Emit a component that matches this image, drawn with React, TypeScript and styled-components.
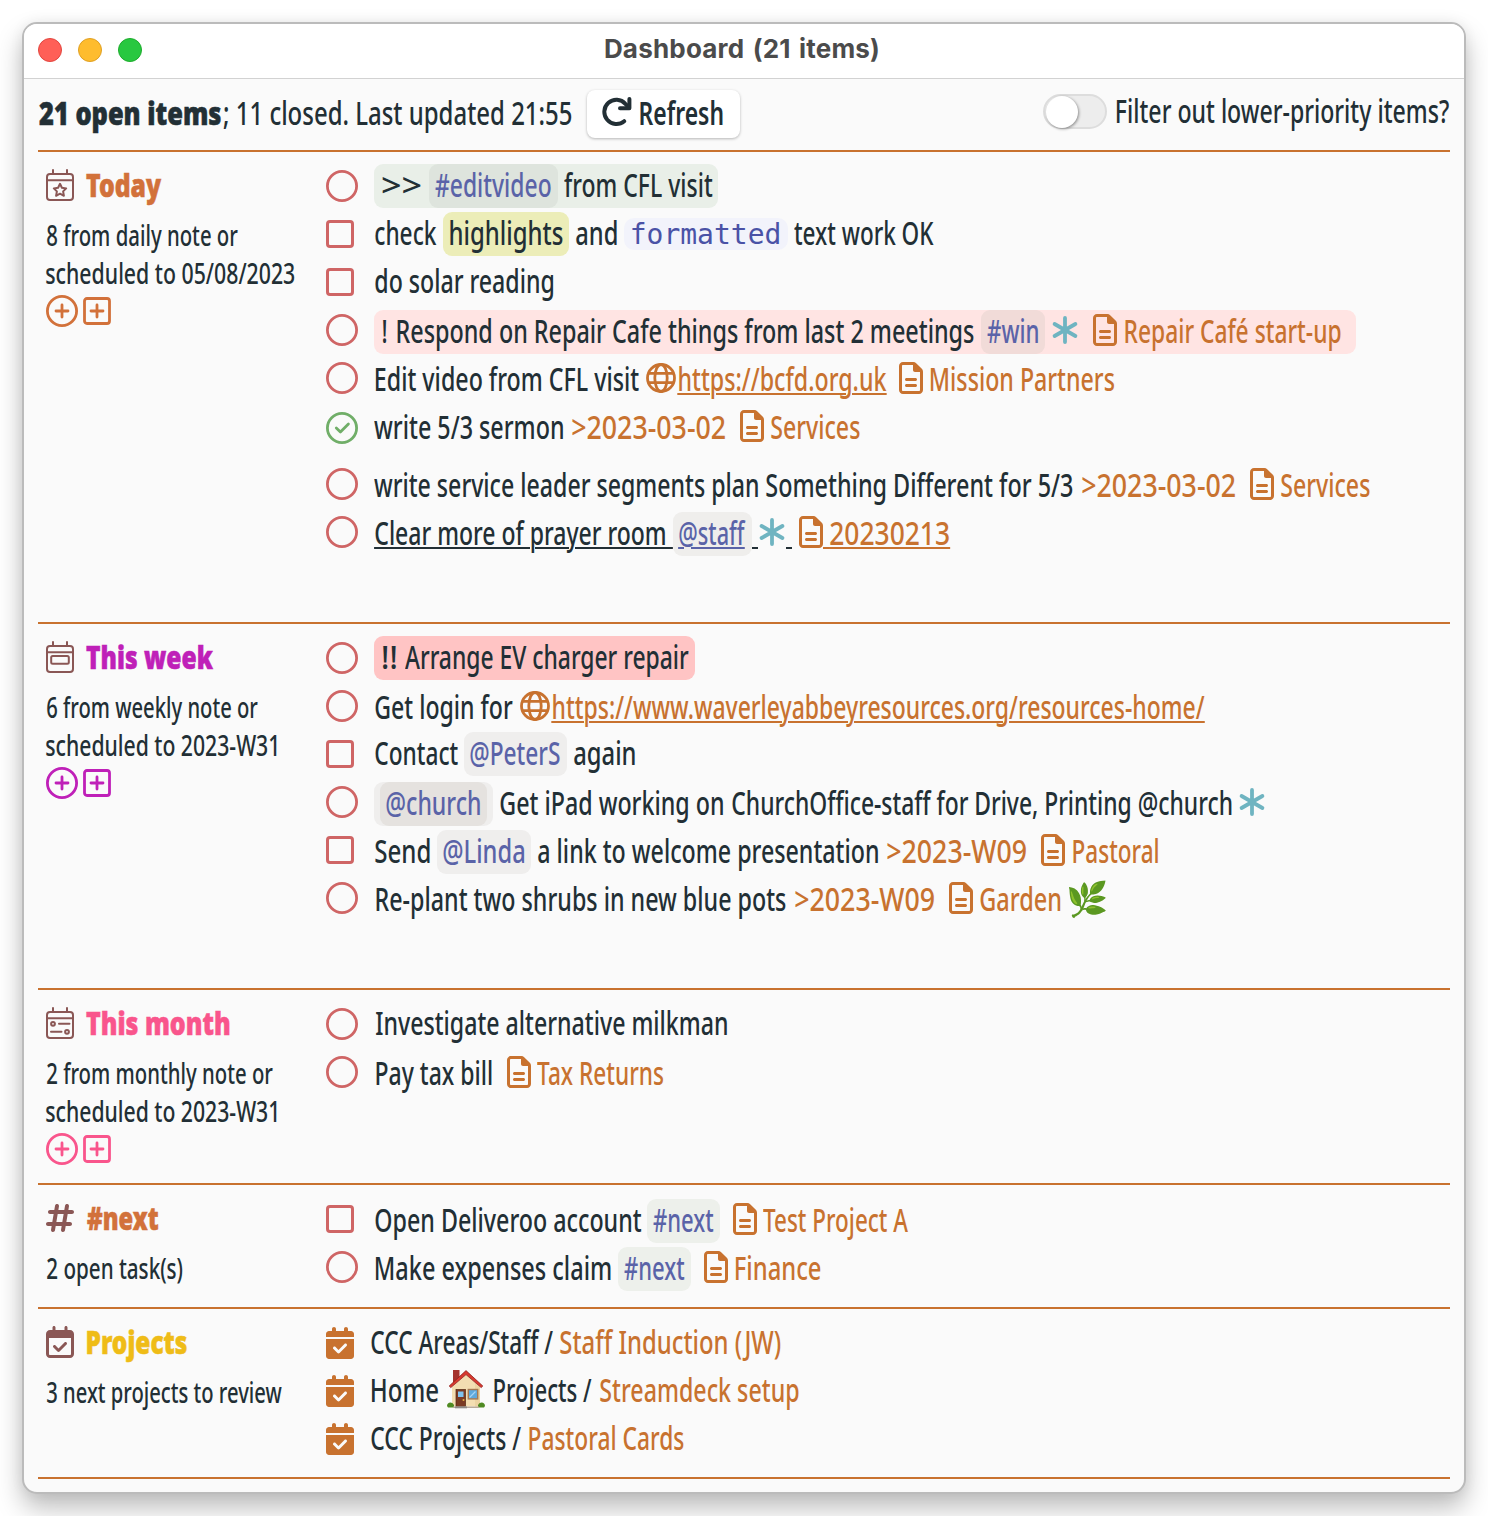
import React, { useLayoutEffect, useRef, useState } from "react";
import styled, { createGlobalStyle } from "styled-components";
import { FaCalendarCheck, FaHashtag, FaRegCalendarCheck, FaRegFileLines } from "react-icons/fa6";

const color = {
  ink: "#222f35",
  orange: "#c8722f",
  today: "#d2713a",
  week: "#bf20b8",
  month: "#f9558c",
  projects: "#efbc17",
  maroon: "#8a5755",
  open: "#cf6565",
  done: "#70ae68",
  tag: "#5a63a8",
  star: "#6fb4c1",
};

const GlobalStyle = createGlobalStyle`
  * { box-sizing: border-box; }
  body { margin: 0; background: #fff; color: ${color.ink}; font-family: "Noto Sans", "Open Sans", sans-serif; }
  svg { display: block; flex: none; }
`;

/* ---------- window chrome ---------- */

const Page = styled.div`
  padding: 22px;
  height: 1516px;
  overflow: hidden;
`;

const Window = styled.div`
  width: 1444px;
  height: 1472px;
  border: 2px solid #bbb;
  border-radius: 15px;
  background: #fafafa;
  overflow: hidden;
  box-shadow: 0 14px 26px rgba(0, 0, 0, 0.26), 0 0 14px rgba(0, 0, 0, 0.06);
`;

const TitleBar = styled.div`
  display: grid;
  grid-template-columns: 1fr auto 1fr;
  height: 55px;
  padding: 0 14px;
  background: #fff;
  border-bottom: 1px solid #d2d2d2;
`;

const Lights = styled.div`
  display: flex;
  gap: 16px;
  padding-top: 14px;
`;

const Light = styled.span<{ $fill: string; $edge: string }>`
  width: 24px;
  height: 24px;
  border-radius: 50%;
  background: ${(p) => p.$fill};
  border: 1px solid ${(p) => p.$edge};
`;

const WindowTitle = styled.div`
  padding-top: 5px;
  margin-right: 4px;
  color: #4b4b4b;
  font: 700 26px/40px Inter, sans-serif;
  letter-spacing: 0.2px;
  word-spacing: 2px;
`;

const Content = styled.div`
  padding: 0 14px;
`;

/* ---------- condensed text ---------- */

const GlyphBox = styled.span<{ $gap: number; $w: number; $tone?: string; $weight?: number; $size?: number; $under?: boolean }>`
  display: block;
  flex: none;
  width: ${(p) => p.$w}px;
  margin-left: ${(p) => p.$gap}px;
  color: ${(p) => p.$tone ?? "inherit"};
  font-weight: ${(p) => p.$weight ?? 500};
  font-size: ${(p) => p.$size ?? 32}px;
  line-height: ${(p) => (p.$size === 28 ? 38 : 41)}px;
  text-decoration: ${(p) => (p.$under ? "underline 2px" : "none")};
  text-underline-offset: 2px;
  -webkit-text-stroke: ${(p) => (p.$weight === 900 ? 0.6 : 0)}px currentColor;
`;

const GlyphRun = styled.span`
  display: block;
  width: max-content;
  white-space: pre;
  transform-origin: 0 0;
  text-decoration: inherit;
`;

type TextProps = { gap?: number; w: number; tone?: string; weight?: number; size?: number; under?: boolean; children: string };

/* Condenses a run of text so that its drawn width is exactly `w`. */
function Text({ gap = 0, w, tone, weight, size, under, children }: TextProps) {
  const ref = useRef<HTMLSpanElement>(null);
  const [fit, setFit] = useState({ scale: 0.75, left: 0 });
  useLayoutEffect(() => {
    const cs = getComputedStyle(ref.current!);
    const ctx = document.createElement("canvas").getContext("2d")!;
    ctx.font = `${cs.fontWeight} ${cs.fontSize} ${cs.fontFamily}`;
    const m = ctx.measureText(children.trimEnd());
    setFit({ scale: w / (m.actualBoundingBoxLeft + m.actualBoundingBoxRight), left: m.actualBoundingBoxLeft });
  }, [children, w]);
  return (
    <GlyphBox $gap={gap} $w={w} $tone={tone} $weight={weight} $size={size} $under={under}>
      <GlyphRun ref={ref} style={{ transform: `translateX(${fit.left * fit.scale}px) scaleX(${fit.scale})` }}>
        {children}
      </GlyphRun>
    </GlyphBox>
  );
}

/* ---------- header ---------- */

const Header = styled.header`
  display: flex;
  align-items: flex-start;
  height: 73px;
  border-bottom: 2px solid ${color.orange};
`;

const Summary = styled.div`
  display: flex;
  padding: 13px 0 0 1px;
`;

const RefreshButton = styled.button`
  display: flex;
  width: 153px;
  height: 48px;
  margin: 11px 0 0 15.5px;
  padding: 2px 0 0 15px;
  border: 0;
  border-radius: 8px;
  background: #fff;
  color: inherit;
  font-family: inherit;
  text-align: left;
  box-shadow: 0 1px 3px rgba(0, 0, 0, 0.28);
  svg { margin-top: 5px; }
`;

const FilterLabel = styled.label`
  display: flex;
  margin-left: auto;
  padding: 11px 1px 0 0;
`;

const Track = styled.span`
  width: 64px;
  height: 35px;
  margin-top: 4px;
  padding: 0 1px;
  border: 2px solid #dddddd;
  border-radius: 18px;
  background: #ededed;
`;

const Knob = styled.span`
  display: block;
  width: 32px;
  height: 32px;
  border-radius: 50%;
  background: #fff;
  box-shadow: 1px 1px 3px rgba(0, 0, 0, 0.4);
`;

/* ---------- sections ---------- */

const Section = styled.section<{ $h: number }>`
  display: grid;
  grid-template-columns: 280px 1fr;
  height: ${(p) => p.$h}px;
  padding: 12px 0 0 8px;
  border-bottom: 2px solid ${color.orange};
`;

const SectionHead = styled.div<{ $tone: string }>`
  display: flex;
  height: 44px;
  margin-bottom: 8px;
  color: ${(p) => p.$tone};
`;

const SectionIcon = styled.span`
  display: flex;
  align-items: center;
  width: 40px;
  height: 42px;
  color: ${color.maroon};
`;

const AddButtons = styled.div<{ $tone: string }>`
  display: flex;
  align-items: center;
  gap: 5px;
  padding-top: 3px;
  color: ${(p) => p.$tone};
`;

const List = styled.div<{ $top?: number }>`
  display: flex;
  flex-direction: column;
  gap: 4px;
  padding-top: ${(p) => p.$top ?? 0}px;
`;

const Row = styled.div<{ $before?: number }>`
  display: flex;
  height: 44px;
  margin-top: ${(p) => p.$before ?? 0}px;
`;

const Status = styled.span<{ $up?: boolean; $w?: number }>`
  display: flex;
  flex: none;
  align-items: center;
  width: ${(p) => p.$w ?? 48}px;
  height: ${(p) => (p.$up ? 40 : 44)}px;
`;

const Chip = styled.span<{ $bg: string; $gap?: number; $pad?: number; $w: number }>`
  display: flex;
  flex: none;
  width: ${(p) => p.$w}px;
  height: 44px;
  margin-left: ${(p) => p.$gap ?? 0}px;
  padding-left: ${(p) => p.$pad ?? 6}px;
  border-radius: 9px;
  background: ${(p) => p.$bg};
`;

const Code = styled.code`
  width: 164px;
  height: 32px;
  margin: 6px 0 0 7px;
  padding-left: 6px;
  border-radius: 10px;
  background: #f2f3fb;
  color: #4a52a6;
  font: 28px/33px "DejaVu Sans Mono", monospace;
`;

const Inline = styled.span<{ $gap?: number; $tone?: string }>`
  display: flex;
  flex: none;
  align-items: center;
  height: 40px;
  margin-left: ${(p) => p.$gap ?? 0}px;
  color: ${(p) => p.$tone ?? "inherit"};
`;

const UnderlinedSpace = styled.span<{ $tone: string; $gap?: number }>`
  width: 6px;
  height: 37px;
  margin-left: ${(p) => p.$gap ?? 0}px;
  border-bottom: 2px solid ${(p) => p.$tone};
`;

const FileIcon = styled(FaRegFileLines)`
  width: 24px;
  height: 32px;
`;

const ReviewIcon = styled(FaCalendarCheck)`
  width: 28px;
  height: 32px;
  color: ${color.orange};
`;

const ProjectsIcon = styled(FaRegCalendarCheck)`
  width: 28px;
  height: 32px;
`;

const HashIcon = styled(FaHashtag)`
  width: 28px;
  height: 32px;
`;

const Emoji = styled.span<{ $gap: number }>`
  width: 42px;
  margin-left: ${(p) => p.$gap}px;
  font: 34px/42px "Noto Color Emoji", sans-serif;
`;

/* ---------- drawings ---------- */

const Circle = () => (
  <svg width="32" height="32" fill="none" stroke={color.open} strokeWidth="2.8">
    <circle cx="16" cy="16" r="14.6" />
  </svg>
);

const Square = () => (
  <svg width="28" height="28" fill="none" stroke={color.open} strokeWidth="3">
    <rect x="1.5" y="1.5" width="25" height="25" rx="2.5" />
  </svg>
);

const DoneCircle = () => (
  <svg width="32" height="32" fill="none" stroke={color.done} strokeWidth="2.8" strokeLinecap="round" strokeLinejoin="round">
    <circle cx="16" cy="16" r="14.6" />
    <path d="M10.3 16l4.1 4 8-8" />
  </svg>
);

const AddCircle = () => (
  <svg width="32" height="32" fill="none" stroke="currentColor" strokeWidth="2.8" strokeLinecap="round">
    <circle cx="16" cy="16" r="14.6" />
    <path d="M16 10v12M10 16h12" />
  </svg>
);

const AddSquare = () => (
  <svg width="28" height="28" fill="none" stroke="currentColor" strokeWidth="2.8" strokeLinecap="round">
    <rect x="1.5" y="1.5" width="25" height="25" rx="2.5" />
    <path d="M14 8v12M8 14h12" />
  </svg>
);

const Asterisk = () => (
  <svg width="26" height="28" fill="none" stroke={color.star} strokeWidth="3.8" strokeLinecap="round">
    <path d="M13 2v24M2.6 8l20.8 12M23.4 8L2.6 20" />
  </svg>
);

const Globe = () => (
  <svg width="30" height="30" fill="none" stroke={color.orange} strokeWidth="2.8">
    <circle cx="15" cy="15" r="13.5" />
    <ellipse cx="15" cy="15" rx="6.2" ry="13.5" />
    <path d="M2.5 10.3h25M2.5 19.7h25" />
  </svg>
);

const RefreshIcon = () => (
  <svg width="30" height="30" fill="none" stroke={color.ink} strokeWidth="4" strokeLinecap="round" strokeLinejoin="round">
    <path d="M22.2 24.2A12.1 12.1 0 1 1 23.4 6.8L27 10.6" />
    <path d="M27.4 2v9.2h-9.4" />
  </svg>
);

const CalendarFrame = ({ children }: { children: React.ReactNode }) => (
  <svg width="28" height="32" fill="none" stroke="currentColor" strokeWidth="2" strokeLinecap="round" strokeLinejoin="round">
    <rect x="1" y="5" width="26" height="26" rx="3" />
    <path d="M1 11.2h26M7 1v4M21 1v4" />
    {children}
  </svg>
);

const DayIcon = () => (
  <CalendarFrame>
    <path d="M14 14.8l1.9 4 4.3.6-3.1 3 .8 4.4-3.9-2.1-3.9 2.1.8-4.4-3.1-3 4.3-.6z" />
  </CalendarFrame>
);

const WeekIcon = () => (
  <CalendarFrame>
    <rect x="5.2" y="15" width="17.6" height="7.8" rx="1.5" />
  </CalendarFrame>
);

const MonthIcon = () => (
  <CalendarFrame>
    <circle cx="7" cy="16.8" r="1.9" />
    <circle cx="21" cy="24.8" r="1.9" />
    <path d="M13 16.8h10.5M5 24.8h10.5" />
  </CalendarFrame>
);

const House = () => (
  <svg width="38" height="40" viewBox="0 0 38 40">
    <path d="M6 1h6.5v9L6 16z" fill="#a5322c" />
    <path d="M5 18L19 5l14 13v19.5H5z" fill="#f3deb2" />
    <path d="M28 14l5 4v19.5h-5z" fill="#ecd3a2" />
    <path d="M2.2 17L19 1.6 35.8 17l-1.6 1.6L19 5.6 3.8 18.6z" fill="#d8392f" stroke="#8f211d" strokeWidth=".8" />
    <rect x="9" y="20.5" width="9.5" height="17" fill="#7b3b24" stroke="#55270f" strokeWidth=".7" />
    <rect x="11" y="22.5" width="5.5" height="5.5" fill="#7fc3ee" />
    <circle cx="16.5" cy="31" r="1" fill="#e5b44a" />
    <rect x="21.3" y="20.5" width="9.4" height="9.4" fill="#5fa9dc" stroke="#a57a53" strokeWidth="1.4" />
    <path d="M22.5 28.5l6-6" stroke="#a5d5f3" strokeWidth="1.2" />
    <path d="M0 37c0-4 5-5 7-1v2.5H1z" fill="#4f8a22" />
    <path d="M38 37c0-4-5-5-7-1v2.500h6z" fill="#4f8a22" />
    <path d="M6 37.5h26v1.500H6z" fill="#b9ab9a" />
    <path d="M8 37.5h12v1.800H8z" fill="#8e8a88" />
  </svg>
);

/* ---------- row parts ---------- */

type TaskProps = { kind?: "circle" | "square" | "done"; up?: boolean; before?: number; children: React.ReactNode };

const Task = ({ kind = "circle", up, before, children }: TaskProps) => (
  <Row $before={before}>
    <Status $up={up}>{kind === "square" ? <Square /> : kind === "done" ? <DoneCircle /> : <Circle />}</Status>
    {children}
  </Row>
);

const NoteLink = ({ gap, textGap = 6.5, w, under, children }: { gap: number; textGap?: number; w: number; under?: boolean; children: string }) => (
  <>
    <Inline $gap={gap} $tone={color.orange}>
      <FileIcon />
    </Inline>
    {under && <UnderlinedSpace $tone={color.orange} />}
    <Text gap={under ? textGap - 6 : textGap} w={w} tone={color.orange} under={under}>
      {children}
    </Text>
  </>
);

const Tag = ({ gap, w, bg, textW, under, children }: { gap: number; w: number; bg: string; textW: number; under?: boolean; children: string }) => (
  <Chip $bg={bg} $gap={gap} $w={w}>
    <Text w={textW} tone={color.tag} under={under}>
      {children}
    </Text>
  </Chip>
);

const Project = ({ children }: { children: React.ReactNode }) => (
  <Row>
    <Status $w={44.5}>
      <ReviewIcon />
    </Status>
    {children}
  </Row>
);

const Heading = ({ icon, tone, gap = 0, w, children }: { icon: React.ReactNode; tone: string; gap?: number; w: number; children: string }) => (
  <SectionHead $tone={tone}>
    <SectionIcon>{icon}</SectionIcon>
    <Text gap={gap} w={w} weight={900}>
      {children}
    </Text>
  </SectionHead>
);

const Add = ({ tone }: { tone: string }) => (
  <AddButtons $tone={tone}>
    <AddCircle />
    <AddSquare />
  </AddButtons>
);

export default function App() {
  return (
    <>
      <GlobalStyle />
      <Page>
        <Window>
          <TitleBar>
            <Lights>
              <Light $fill="#ff5f57" $edge="#e2463f" />
              <Light $fill="#febc2e" $edge="#e0a023" />
              <Light $fill="#28c840" $edge="#1dac2c" />
            </Lights>
            <WindowTitle>Dashboard (21 items)</WindowTitle>
          </TitleBar>
          <Content>
            <Header>
              <Summary>
                <Text w={182} weight={900}>21 open items</Text>
                <Text gap={1.5} w={348.5}>; 11 closed. Last updated 21:55</Text>
              </Summary>
              <RefreshButton>
                <RefreshIcon />
                <Text gap={8.5} w={83} weight={600}>Refresh</Text>
              </RefreshButton>
              <FilterLabel>
                <Track>
                  <Knob />
                </Track>
                <Text gap={10} w={332}>Filter out lower-priority items?</Text>
              </FilterLabel>
            </Header>

            <Section $h={472}>
              <div>
                <Heading icon={<DayIcon />} tone={color.today} w={75.5}>Today</Heading>
                <Text gap={0.5} w={191} size={28}>8 from daily note or</Text>
                <Text w={248.5} size={28}>scheduled to 05/08/2023</Text>
                <Add tone={color.today} />
              </div>
              <List>
                <Task>
                  <Chip $bg="#e9efe8" $w={344} $pad={7.5}>
                    <Text w={38.5}>&gt;&gt;</Text>
                    <Tag gap={9} w={129} bg="#dee4dd" textW={115.5}>#editvideo</Tag>
                    <Text gap={5.5} w={148.5}>from CFL visit</Text>
                  </Chip>
                </Task>
                <Task kind="square">
                  <Text gap={0.7} w={61.5}>check</Text>
                  <Chip $bg="#ecedb8" $gap={6.8} $w={126}>
                    <Text gap={0.7} w={113}>highlights</Text>
                  </Chip>
                  <Text gap={6.7} w={41}>and</Text>
                  <Code>formatted</Code>
                  <Text gap={6.5} w={140}>text work OK</Text>
                </Task>
                <Task kind="square">
                  <Text gap={0.7} w={178.5}>do solar reading</Text>
                </Task>
                <Task up before={2}>
                  <Chip $bg="#ffe4e3" $w={982} $pad={9}>
                    <Text w={3.5}>!</Text>
                    <Text gap={10} w={577}>Respond on Repair Cafe things from last 2 meetings</Text>
                    <Tag gap={7.5} w={64} bg="#f1dbd8" textW={51}>#win</Tag>
                    <Inline $gap={7}>
                      <Asterisk />
                    </Inline>
                    <NoteLink gap={15} textGap={8} w={216}>Repair Café start-up</NoteLink>
                  </Chip>
                </Task>
                <Task up>
                  <Text gap={2} w={263}>Edit video from CFL visit</Text>
                  <Inline $gap={7}>
                    <Globe />
                  </Inline>
                  <Text gap={2.5} w={207.5} tone={color.orange} under>https://bcfd.org.uk</Text>
                  <NoteLink gap={13} textGap={7.5} w={183.5}>Mission Partners</NoteLink>
                </Task>
                <Task kind="done">
                  <Text gap={0} w={189}>write 5/3 sermon</Text>
                  <Text gap={9} w={153} tone={color.orange}>&gt;2023-03-02</Text>
                  <NoteLink gap={15} textGap={7} w={89}>Services</NoteLink>
                </Task>
                <Task up before={10}>
                  <Text gap={0} w={384}>write service leader segments plan</Text>
                  <Text gap={8} w={306.5}>Something Different for 5/3</Text>
                  <Text gap={9} w={153} tone={color.orange}>&gt;2023-03-02</Text>
                  <NoteLink gap={15} textGap={7} w={89}>Services</NoteLink>
                </Task>
                <Task up>
                  <Text gap={1} w={290} under>{"Clear more of prayer room "}</Text>
                  <Tag gap={8} w={79} bg="#efeeec" textW={67} under>@staff</Tag>
                  <UnderlinedSpace $tone={color.ink} />
                  <Inline $gap={0.5}>
                    <Asterisk />
                  </Inline>
                  <UnderlinedSpace $tone={color.ink} $gap={1.5} />
                  <NoteLink gap={7} textGap={7} w={119} under>20230213</NoteLink>
                </Task>
              </List>
            </Section>

            <Section $h={366}>
              <div>
                <Heading icon={<WeekIcon />} tone={color.week} w={127.5}>This week</Heading>
                <Text gap={0.5} w={211} size={28}>6 from weekly note or</Text>
                <Text w={230.5} size={28}>scheduled to 2023-W31</Text>
                <Add tone={color.week} />
              </div>
              <List>
                <Task>
                  <Chip $bg="#ffc4c4" $w={321} $pad={8.5}>
                    <Text w={13}>!!</Text>
                    <Text gap={9} w={284}>Arrange EV charger repair</Text>
                  </Chip>
                </Task>
                <Task up before={2}>
                  <Text gap={1} w={138}>Get login for</Text>
                  <Inline $gap={6.5}>
                    <Globe />
                  </Inline>
                  <Text gap={3} w={652} tone={color.orange} under>https://www.waverleyabbeyresources.org/resources-home/</Text>
                </Task>
                <Task kind="square" before={-2}>
                  <Text gap={1} w={83}>Contact</Text>
                  <Tag gap={6} w={103} bg="#efeeed" textW={90}>@PeterS</Tag>
                  <Text gap={6.5} w={61}>again</Text>
                </Task>
                <Task up before={2}>
                  <Chip $bg="#efeeed" $w={118.5} $pad={6}>
                    <Tag gap={0} w={107} bg="#e5e2df" textW={94}>@church</Tag>
                  </Chip>
                  <Text gap={7.5} w={223}>Get iPad working on</Text>
                  <Text gap={8.5} w={499.5}>ChurchOffice-staff for Drive, Printing @church</Text>
                  <Inline $gap={8}>
                    <Asterisk />
                  </Inline>
                </Task>
                <Task kind="square" up>
                  <Text gap={0.7} w={55}>Send</Text>
                  <Tag gap={7.3} w={94} bg="#efeeed" textW={81}>@Linda</Tag>
                  <Text gap={7} w={340}>a link to welcome presentation</Text>
                  <Text gap={9} w={139} tone={color.orange}>&gt;2023-W09</Text>
                  <NoteLink gap={15} textGap={8} w={85.5}>Pastoral</NoteLink>
                </Task>
                <Task up>
                  <Text gap={2} w={410}>Re-plant two shrubs in new blue pots</Text>
                  <Text gap={8.5} w={139} tone={color.orange}>&gt;2023-W09</Text>
                  <NoteLink gap={15} textGap={7} w={80.5}>Garden</NoteLink>
                  <Emoji $gap={6.5}>🌿</Emoji>
                </Task>
              </List>
            </Section>

            <Section $h={195}>
              <div>
                <Heading icon={<MonthIcon />} tone={color.month} w={143.5}>This month</Heading>
                <Text gap={0.5} w={226} size={28}>2 from monthly note or</Text>
                <Text w={230.5} size={28}>scheduled to 2023-W31</Text>
                <Add tone={color.month} />
              </div>
              <List>
                <Task>
                  <Text gap={1.5} w={351}>Investigate alternative milkman</Text>
                </Task>
                <Task up before={2}>
                  <Text gap={2} w={116}>Pay tax bill</Text>
                  <NoteLink gap={14.5} textGap={6} w={126.5}>Tax Returns</NoteLink>
                </Task>
              </List>
            </Section>

            <Section $h={124}>
              <div>
                <Heading icon={<HashIcon />} tone={color.today} gap={1} w={71}>#next</Heading>
                <Text gap={0.5} w={135.5} size={28}>2 open task(s)</Text>
              </div>
              <List $top={2}>
                <Task kind="square" up>
                  <Text gap={0.5} w={266.5}>Open Deliveroo account</Text>
                  <Tag gap={6} w={73} bg="#edf0eb" textW={60.5}>#next</Tag>
                  <NoteLink gap={13} textGap={6} w={145}>Test Project A</NoteLink>
                </Task>
                <Task up>
                  <Text gap={2} w={234.5}>Make expenses claim</Text>
                  <Tag gap={7.5} w={73} bg="#edf0eb" textW={60.5}>#next</Tag>
                  <NoteLink gap={13} textGap={7.5} w={84.5}>Finance</NoteLink>
                </Task>
              </List>
            </Section>

            <Section $h={170}>
              <div>
                <Heading icon={<ProjectsIcon />} tone={color.projects} gap={1} w={100}>Projects</Heading>
                <Text gap={0.5} w={235} size={28}>3 next projects to review</Text>
              </div>
              <List>
                <Project>
                  <Text w={182.5}>CCC Areas/Staff /</Text>
                  <Text gap={6.5} w={220.5} tone={color.orange}>Staff Induction (JW)</Text>
                </Project>
                <Project>
                  <Text gap={1.5} w={66}>Home</Text>
                  <Inline $gap={9}>
                    <House />
                  </Inline>
                  <Text gap={9} w={98}>Projects /</Text>
                  <Text gap={7.5} w={199} tone={color.orange}>Streamdeck setup</Text>
                </Project>
                <Project>
                  <Text w={150.5}>CCC Projects /</Text>
                  <Text gap={8} w={155} tone={color.orange}>Pastoral Cards</Text>
                </Project>
              </List>
            </Section>
          </Content>
        </Window>
      </Page>
    </>
  );
}
